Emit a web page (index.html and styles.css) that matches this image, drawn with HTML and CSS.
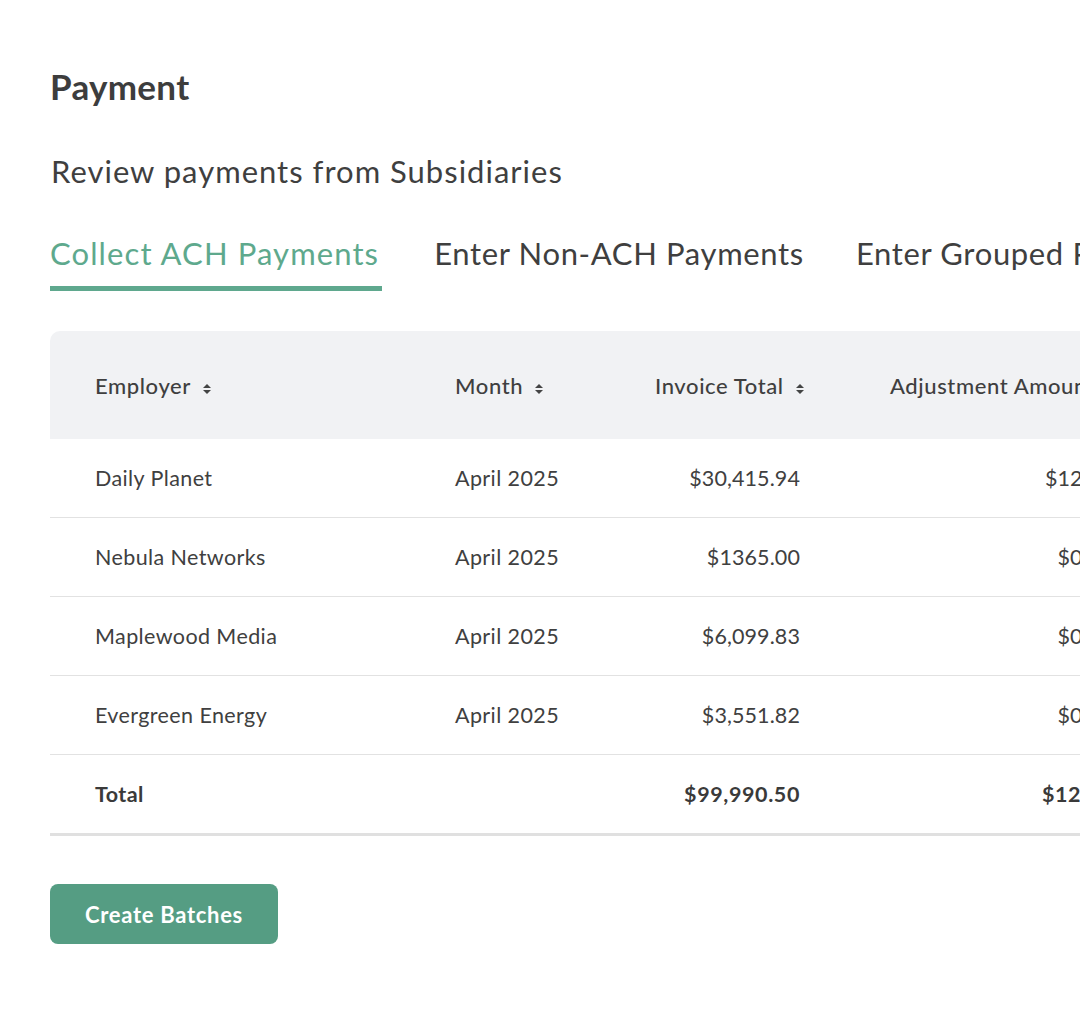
FILE: index.html
```html
<!DOCTYPE html>
<html lang="en">
<head>
<meta charset="utf-8">
<title>Payment</title>
<link rel="stylesheet" href="styles.css">
</head>
<body>
<main class="page">
  <h1 class="title">Payment</h1>
  <p class="subtitle">Review payments from Subsidiaries</p>
  <nav class="tabs">
    <a class="tab active">Collect ACH Payments</a>
    <a class="tab">Enter Non-ACH Payments</a>
    <a class="tab">Enter Grouped Payments</a>
  </nav>
  <div class="table-wrap">
    <table class="grid">
      <colgroup>
        <col class="c-emp"><col class="c-month"><col class="c-inv"><col class="c-adj"><col class="c-due">
      </colgroup>
      <thead>
        <tr>
          <th class="left">Employer <span class="sort"></span></th>
          <th class="left">Month <span class="sort"></span></th>
          <th class="right">Invoice Total <span class="sort"></span></th>
          <th class="right">Adjustment Amount <span class="sort"></span></th>
          <th class="right">Amount Due <span class="sort"></span></th>
        </tr>
      </thead>
      <tbody>
        <tr><td>Daily Planet</td><td>April 2025</td><td class="right">$30,415.94</td><td class="right">$12.00</td><td class="right">$30,427.94</td></tr>
        <tr><td>Nebula Networks</td><td>April 2025</td><td class="right">$1365.00</td><td class="right">$0.00</td><td class="right">$1365.00</td></tr>
        <tr><td>Maplewood Media</td><td>April 2025</td><td class="right">$6,099.83</td><td class="right">$0.00</td><td class="right">$6,099.83</td></tr>
        <tr><td>Evergreen Energy</td><td>April 2025</td><td class="right">$3,551.82</td><td class="right">$0.00</td><td class="right">$3,551.82</td></tr>
      </tbody>
      <tfoot>
        <tr><td>Total</td><td></td><td class="right">$99,990.50</td><td class="right">$12.00</td><td class="right">$100,002.50</td></tr>
      </tfoot>
    </table>
  </div>
  <button class="btn">Create Batches</button>
</main>
</body>
</html>
```
FILE: styles.css
```css
html, body {
  margin: 0;
  padding: 0;
  background: #ffffff;
  overflow: hidden;
}
body {
  font-family: "Lato", "Open Sans", sans-serif;
  color: #3f3f3f;
  width: 1080px;
  height: 1010px;
}
.page {
  padding: 66px 0 0 50px;
  width: 1400px;
}
.title {
  margin: 0;
  font-size: 35px;
  font-weight: 700;
  line-height: 40px;
  letter-spacing: 0.3px;
  color: #3d3d3d;
}
.subtitle {
  margin: 45px 0 0 1px;
  font-size: 31px;
  font-weight: 400;
  line-height: 40px;
  letter-spacing: 1px;
  color: #3f3f3f;
}
.tabs {
  display: flex;
  gap: 52px;
  margin-top: 42px;
}
.tab {
  font-size: 31px;
  line-height: 40px;
  letter-spacing: 0.65px;
  padding-bottom: 13px;
  border-bottom: 5px solid transparent;
  color: #3f3f3f;
  white-space: nowrap;
}
.tab.active {
  color: #5ea98d;
  letter-spacing: 1.1px;
  border-bottom-color: #5fa88e;
  padding-right: 3px;
}
.table-wrap {
  margin-top: 40px;
}
.grid {
  border-collapse: collapse;
  table-layout: fixed;
  width: 1390px;
  font-size: 21.5px;
  letter-spacing: 0.4px;
}
.c-emp { width: 360px; }
.c-month { width: 200px; }
.c-inv { width: 235px; }
.c-adj { width: 313px; }
.c-due { width: 282px; }
.grid thead th {
  background: #f1f2f4;
  height: 108px;
  padding: 0 45px;
  font-size: 22px;
  letter-spacing: 0.6px;
  font-weight: 500;
  color: #3f3f3f;
  text-align: left;
  white-space: nowrap;
}
.grid thead th.right { padding-right: 50px; }
.grid thead th:first-child { border-top-left-radius: 10px; }
.grid th.right, .grid td.right { text-align: right; }
.grid tbody td, .grid tfoot td {
  height: 78px;
  padding: 0 45px;
  border-bottom: 1px solid #e2e2e2;
  color: #404040;
  white-space: nowrap;
}
.grid td.right { letter-spacing: 0.1px; }
.grid tfoot td {
  font-weight: 700;
  border-bottom: 3px solid #e0e0e0;
  color: #3a3a3a;
}
.grid tfoot td.right { letter-spacing: 0.6px; }
.sort {
  display: inline-block;
  width: 8px;
  height: 12px;
  margin-left: 6px;
  vertical-align: -1px;
  position: relative;
}
.sort::before, .sort::after {
  content: "";
  position: absolute;
  left: 0;
  border-left: 4px solid transparent;
  border-right: 4px solid transparent;
}
.sort::before { top: 1px; border-bottom: 4px solid #444; }
.sort::after { top: 7px; border-top: 4px solid #444; }
.btn {
  margin-top: 48px;
  width: 228px;
  height: 60px;
  border: 0;
  border-radius: 8px;
  background: #559d83;
  color: #ffffff;
  font-family: inherit;
  font-size: 22px;
  font-weight: 700;
  letter-spacing: 0.7px;
  cursor: pointer;
}
```
